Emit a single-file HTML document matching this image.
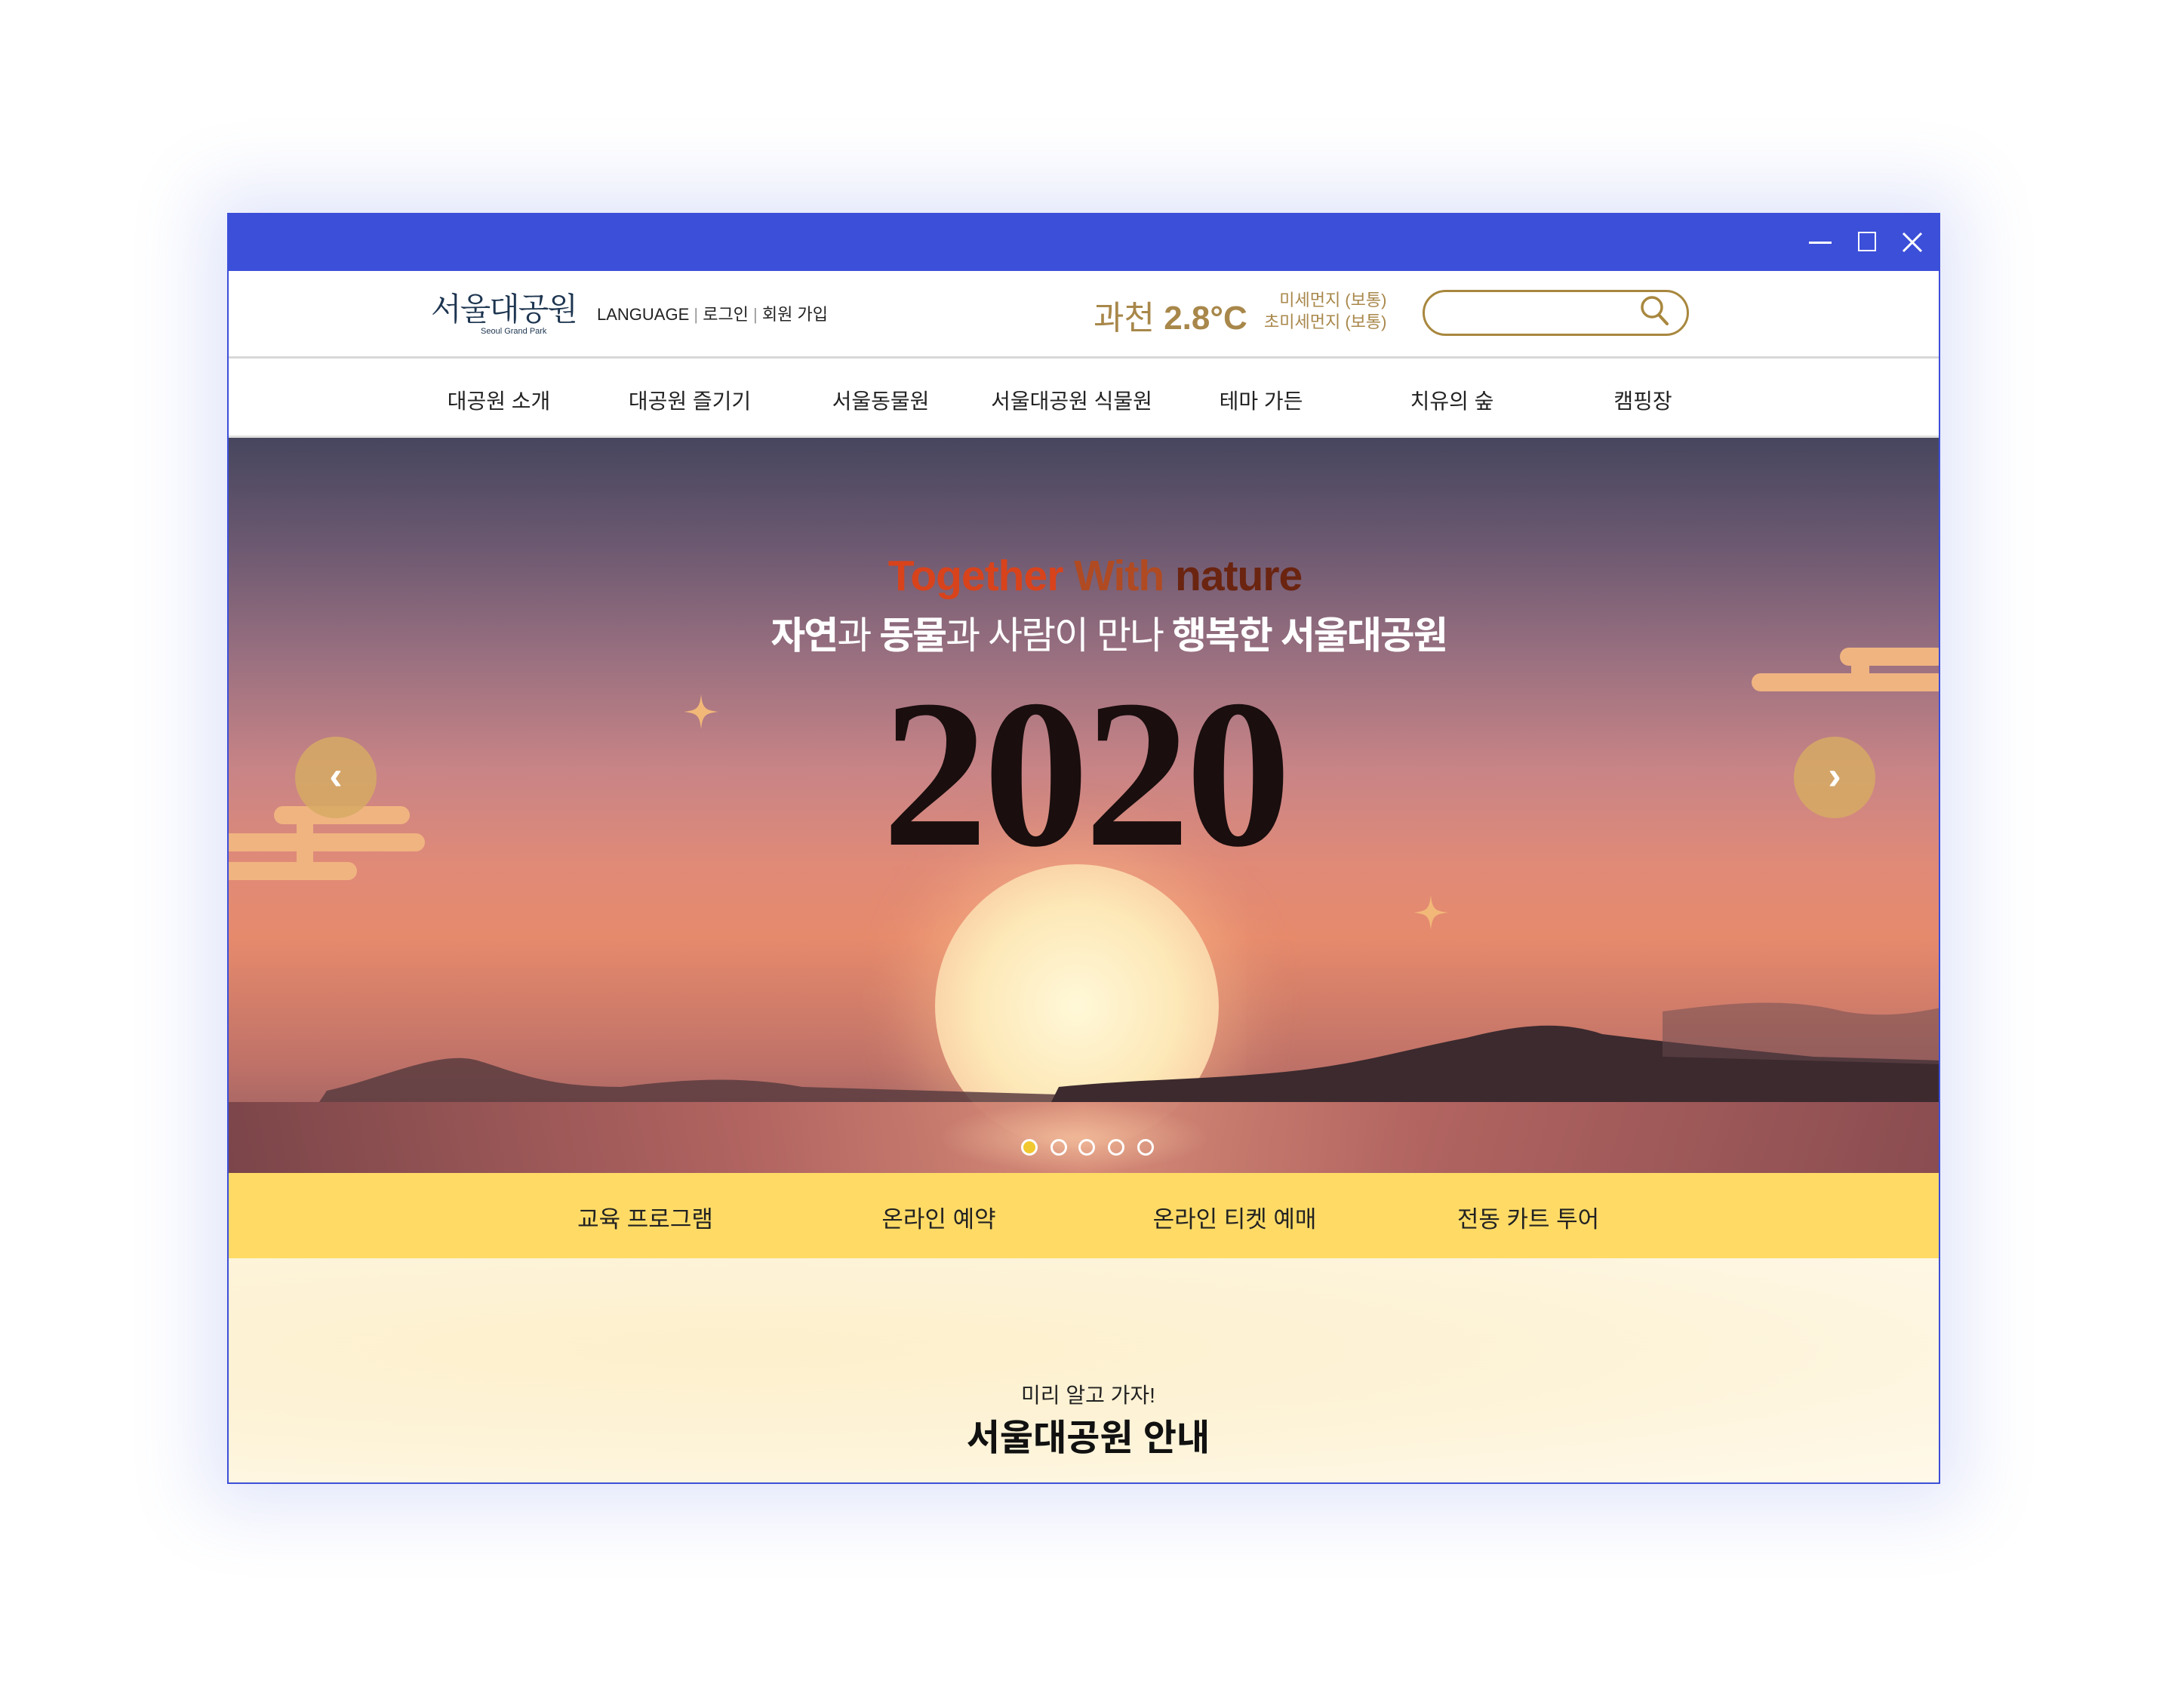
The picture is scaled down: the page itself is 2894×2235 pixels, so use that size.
<!DOCTYPE html>
<html><head><meta charset="utf-8">
<style>
*{margin:0;padding:0;box-sizing:border-box}
body{width:2894px;height:2235px;background:#fff;position:relative;overflow:hidden;font-family:"Liberation Sans","Noto Sans CJK KR",sans-serif}
.win{position:absolute;left:301px;top:282px;width:2270px;height:1684px;border:2px solid #3c4fd9;background:#fff;box-shadow:0 0 90px 30px rgba(90,110,230,0.18);overflow:hidden}
.abs{position:absolute}
.title{left:0;top:0;width:100%;height:75px;background:#3c4fd9}
.hdr{left:0;top:75px;width:100%;height:116px;border-bottom:3px solid #d8d8d8}
.nav{left:0;top:194px;width:100%;height:102px;border-bottom:3px solid #e0e0e0}
.nav span{position:absolute;top:32px;font-size:28px;color:#222;transform:translateX(-50%);white-space:nowrap}
.hero{left:0;top:296px;width:100%;height:974px;overflow:hidden;
background:linear-gradient(180deg,#46465e 0%,#6a5870 14%,#9a7080 30%,#c88486 45%,#e08a78 58%,#e68a6c 68%,#c07268 85%,#8a5860 100%)}
.yel{left:0;top:1270px;width:100%;height:113px;background:#ffdb66}
.yel span{position:absolute;top:36px;font-size:31px;color:#222;transform:translateX(-50%);white-space:nowrap}
.bot{left:0;top:1383px;width:100%;height:300px;background:radial-gradient(ellipse at 30% 40%,#fdf0cc 0%,#fdf3d8 50%,#fff9ea 100%)}
.c{position:absolute;transform:translateX(-50%);white-space:nowrap}
.cl{position:absolute;background:#f0b480;border-radius:14px}
</style></head><body>
<div class="win">
 <div class="abs title">
  <div class="abs" style="left:2094px;top:36px;width:30px;height:3px;background:#fff"></div>
  <div class="abs" style="left:2159px;top:23px;width:24px;height:26px;border:2px solid #fff"></div>
  <svg class="abs" style="left:2216px;top:22px" width="30" height="30" viewBox="0 0 30 30"><path d="M3 3L27 27M27 3L3 27" stroke="#fff" stroke-width="3"/></svg>
 </div>
 <div class="abs hdr">
  <div class="abs" style="left:268px;top:18px;font-family:'Noto Serif CJK SC',serif;font-size:42px;color:#1d3550;letter-spacing:-2px">서울대공원</div>
  <div class="abs" style="left:334px;top:74px;font-size:11px;color:#1d3550">Seoul Grand Park</div>
  <div class="abs" style="left:488px;top:40px;font-size:22px;color:#222">LANGUAGE <span style="color:#999">|</span> 로그인 <span style="color:#999">|</span> 회원 가입</div>
  <div class="abs" style="left:1146px;top:26px;font-size:44px;color:#a8874a;font-weight:bold"><span style="font-weight:normal">과천</span> 2.8°C</div>
  <div class="abs" style="left:1372px;top:24px;font-size:22px;color:#a8874a;line-height:29px;text-align:right">미세먼지 (보통)<br>초미세먼지 (보통)</div>
  <div class="abs" style="left:1582px;top:25px;width:353px;height:61px;border:3px solid #a8873e;border-radius:31px"></div>
  <svg class="abs" style="left:1868px;top:30px" width="44" height="46" viewBox="0 0 44 46"><circle cx="18" cy="18" r="13" fill="none" stroke="#a8873e" stroke-width="3.5"/><path d="M27 28L38 40" stroke="#a8873e" stroke-width="4" stroke-linecap="round"/></svg>
 </div>
 <div class="abs nav">
  <span style="left:358px">대공원 소개</span><span style="left:611px">대공원 즐기기</span><span style="left:864px">서울동물원</span><span style="left:1117px">서울대공원 식물원</span><span style="left:1368px">테마 가든</span><span style="left:1621px">치유의 숲</span><span style="left:1874px">캠핑장</span>
 </div>
 <div class="abs hero">
  <div class="abs" style="left:936px;top:565px;width:376px;height:376px;border-radius:50%;background:radial-gradient(circle,#fff8d8 0%,#fde8b8 50%,#f8c8a0 85%,rgba(240,160,120,0.6) 100%);box-shadow:0 0 80px 30px rgba(255,190,140,0.45)"></div>
  <svg class="abs" style="left:0;top:700px" width="2270" height="180" viewBox="0 0 2270 180">
   <path d="M120 180L130 165C200 150 280 110 330 125C380 140 420 160 520 160C600 150 680 145 760 160L1100 170L1100 180Z" fill="#5a3c40" opacity="0.85"/>
   <path d="M1090 180L1100 160C1200 150 1300 150 1400 140C1500 130 1560 110 1640 95C1700 80 1760 70 1820 90C1900 100 2000 110 2100 120L2270 125L2270 180Z" fill="#3c2a2e"/>
   <path d="M1900 60C1980 50 2060 40 2140 60C2200 70 2240 60 2270 55L2270 130L1900 120Z" fill="#6a4a50" opacity="0.5"/>
  </svg>
  <div class="abs" style="left:0;top:880px;width:100%;height:94px;background:linear-gradient(90deg,#7a4448,#b26460 30%,#d88c78 50%,#b26460 70%,#8a4c50);opacity:0.95"></div>
  <div class="abs" style="left:940px;top:880px;width:360px;height:94px;background:radial-gradient(ellipse,rgba(255,210,170,0.6),rgba(255,200,160,0) 70%)"></div>
  <div class="c" style="left:1148px;top:150px;font-size:57px;font-weight:bold;letter-spacing:-1px"><span style="color:#d8431c">Together</span> <span style="color:#b04a22">With</span> <span style="color:#6a2410">nature</span></div>
  <div class="c" style="left:1166px;top:222px;font-size:50px;color:#fff;letter-spacing:-2px"><b>자연</b>과 <b>동물</b>과 사람이 만나 <b>행복한 서울대공원</b></div>
  <div class="c" style="left:1134px;top:310px;font-family:'Liberation Serif',serif;font-weight:bold;font-size:280px;line-height:270px;color:#1a0e0e;letter-spacing:-6px">2020</div>
  <div class="cl" style="left:60px;top:488px;width:180px;height:24px"></div>
  <div class="cl" style="left:-10px;top:524px;width:270px;height:24px"></div>
  <div class="cl" style="left:-10px;top:562px;width:180px;height:24px"></div>
  <div class="abs" style="left:90px;top:488px;width:22px;height:96px;background:#f0b480"></div>
  <div class="cl" style="left:2018px;top:312px;width:270px;height:24px"></div>
  <div class="cl" style="left:2135px;top:278px;width:140px;height:24px"></div>
  <div class="abs" style="left:2150px;top:278px;width:24px;height:58px;background:#f0b480"></div>
  <svg class="abs" style="left:603px;top:340px" width="46" height="46" viewBox="0 0 46 46"><path d="M23 0C25 18 28 21 46 23C28 25 25 28 23 46C21 28 18 25 0 23C18 21 21 18 23 0Z" fill="#f2b878"/></svg>
  <svg class="abs" style="left:1570px;top:606px" width="46" height="46" viewBox="0 0 46 46"><path d="M23 0C25 18 28 21 46 23C28 25 25 28 23 46C21 28 18 25 0 23C18 21 21 18 23 0Z" fill="#f2b878"/></svg>
  <div class="abs" style="left:88px;top:396px;width:108px;height:108px;border-radius:50%;background:rgba(214,170,100,0.85);color:#fff;font-size:52px;font-weight:bold;text-align:center;line-height:104px">‹</div>
  <div class="abs" style="left:2074px;top:396px;width:108px;height:108px;border-radius:50%;background:rgba(214,170,100,0.85);color:#fff;font-size:52px;font-weight:bold;text-align:center;line-height:104px">›</div>
  <div class="abs" style="left:1050px;top:929px;width:22px;height:22px;border-radius:50%;background:#f2c830;border:3px solid #fff"></div>
  <div class="abs" style="left:1089px;top:929px;width:22px;height:22px;border-radius:50%;border:3px solid #fff"></div>
  <div class="abs" style="left:1126px;top:929px;width:22px;height:22px;border-radius:50%;border:3px solid #fff"></div>
  <div class="abs" style="left:1165px;top:929px;width:22px;height:22px;border-radius:50%;border:3px solid #fff"></div>
  <div class="abs" style="left:1204px;top:929px;width:22px;height:22px;border-radius:50%;border:3px solid #fff"></div>
 </div>
 <div class="abs yel">
  <span style="left:552px">교육 프로그램</span><span style="left:941px">온라인 예약</span><span style="left:1333px">온라인 티켓 예매</span><span style="left:1722px">전동 카트 투어</span>
 </div>
 <div class="abs bot">
  <div class="c" style="left:1139px;top:160px;font-size:28px;color:#222">미리 알고 가자!</div>
  <div class="c" style="left:1139px;top:198px;font-size:48px;font-weight:bold;color:#111">서울대공원 안내</div>
 </div>
</div>
</body></html>
